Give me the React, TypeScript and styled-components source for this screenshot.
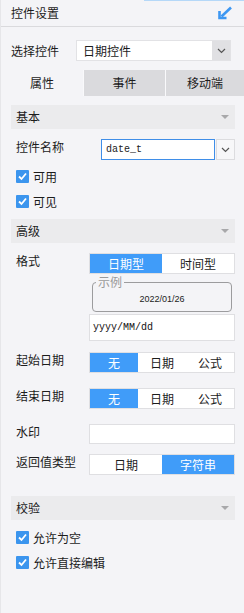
import React from 'react';
import styled, { createGlobalStyle } from 'styled-components';

const GlobalStyle = createGlobalStyle`
  html, body {
    margin: 0;
    padding: 0;
    background: #f4f4f7;
  }
  body {
    font-family: "Noto Sans CJK SC", "Noto Sans", sans-serif;
    font-size: 12px;
    color: #1c1c1c;
  }
`;

const BLUE = '#409cf9';

const Chevron = () => (
  <svg width='9' height='6' viewBox='0 0 9 6'>
    <polyline points='1,1 4.5,4.5 8,1' fill='none' stroke='#555' strokeWidth='1.2' />
  </svg>
);

const ShrinkIcon = () => (
  <svg width='16' height='14' viewBox='0 0 16 14'>
    <line x1='14' y1='1.5' x2='4.5' y2='10.5' stroke='#3d97f2' strokeWidth='2.6' />
    <polyline points='2.5,5 2.5,12 9.5,12' fill='none' stroke='#3d97f2' strokeWidth='2.6' />
  </svg>
);

const CheckBox = () => (
  <Box>
    <svg width='11' height='11' viewBox='0 0 11 11'>
      <polyline points='2,5.5 4.5,8 9,2.5' fill='none' stroke='#fff' strokeWidth='1.8' />
    </svg>
  </Box>
);

const Segmented = ({ options, active }: { options: string[]; active: number }) => (
  <SegmentWrap count={options.length}>
    {options.map((o, i) => (
      <Segment key={o} active={i === active}>
        {o}
      </Segment>
    ))}
  </SegmentWrap>
);

const Section = ({ title, top }: { title: string; top: number }) => (
  <SectionHeader top={top}>
    <span>{title}</span>
    <Triangle />
  </SectionHeader>
);

const App = () => {
  return (
    <>
      <GlobalStyle />
      <Panel>
        <Header>
          <span>控件设置</span>
          <ShrinkIcon />
        </Header>

        <SelectRow>
          <SelectLabel>选择控件</SelectLabel>
          <SelectBox>
            <SelectValue>日期控件</SelectValue>
            <SelectArrow>
              <Chevron />
            </SelectArrow>
          </SelectBox>
        </SelectRow>

        <Tabs>
          <Tab active>属性</Tab>
          <Tab>事件</Tab>
          <Tab>移动端</Tab>
        </Tabs>

        <Section title='基本' top={9} />
        <FormRow top={10} labelWidth={85}>
          <Label>控件名称</Label>
          <NameField>
            <NameInput>date_t</NameInput>
            <DropButton>
              <Chevron />
            </DropButton>
          </NameField>
        </FormRow>
        <CheckRow top={4}>
          <CheckBox />
          可用
        </CheckRow>
        <CheckRow>
          <CheckBox />
          可见
        </CheckRow>

        <Section title='高级' top={5} />
        <FormRow top={10}>
          <Label>格式</Label>
          <FormatColumn>
            <Segmented options={['日期型', '时间型']} active={0} />
            <Example>
              <legend>示例</legend>
              <ExampleText>2022/01/26</ExampleText>
            </Example>
            <TextField height={27} mono>
              yyyy/MM/dd
            </TextField>
          </FormatColumn>
        </FormRow>
        <FormRow top={11}>
          <Label>起始日期</Label>
          <Segmented options={['无', '日期', '公式']} active={0} />
        </FormRow>
        <FormRow top={15}>
          <Label>结束日期</Label>
          <Segmented options={['无', '日期', '公式']} active={0} />
        </FormRow>
        <FormRow top={15}>
          <Label>水印</Label>
          <TextField height={20} />
        </FormRow>
        <FormRow top={10}>
          <Label>返回值类型</Label>
          <Segmented options={['日期', '字符串']} active={1} />
        </FormRow>

        <Section title='校验' top={21} />
        <CheckRow top={5}>
          <CheckBox />
          允许为空
        </CheckRow>
        <CheckRow>
          <CheckBox />
          允许直接编辑
        </CheckRow>
      </Panel>
    </>
  );
};

const Panel = styled.div`
  position: relative;
  width: 244px;
  height: 613px;
  box-sizing: border-box;
  border-left: 1px solid #e6e6e9;
  background: #f4f4f7;
  overflow: hidden;

  &::before {
    content: '';
    position: absolute;
    top: 0;
    left: 143px;
    right: 0;
    height: 1px;
    background: #b5d8f8;
  }
`;

const Header = styled.div`
  height: 26px;
  border-bottom: 1px solid #dadadd;
  display: flex;
  align-items: center;
  justify-content: space-between;
  padding: 0 11px 0 10px;
  line-height: 16px;
`;

const SelectRow = styled.div`
  display: flex;
  align-items: center;
  margin-top: 13px;
  padding: 0 13px 0 10px;
`;

const SelectLabel = styled.span`
  width: 65px;
  line-height: 16px;
`;

const SelectBox = styled.div`
  flex: 1;
  height: 21px;
  display: flex;
  background: #fff;
  border: 1px solid #e2e2e5;
  box-sizing: border-box;
`;

const SelectValue = styled.div`
  flex: 1;
  padding-left: 6px;
  line-height: 19px;
`;

const SelectArrow = styled.div`
  width: 18px;
  background: #e0e0e3;
  display: flex;
  align-items: center;
  justify-content: center;
`;

const Tabs = styled.div`
  margin-top: 9px;
  display: grid;
  grid-template-columns: 82px 81px 1fr;
  column-gap: 1px;
  background: #f9f9fb;
`;

const Tab = styled.div<{ active?: boolean }>`
  height: 26px;
  line-height: 26px;
  text-align: center;
  background: ${({ active }) => (active ? '#f4f4f7' : '#dadadd')};
`;

const SectionHeader = styled.div<{ top: number }>`
  margin: ${({ top }) => top}px 9px 0 10px;
  height: 24px;
  background: #ebebed;
  display: flex;
  align-items: center;
  justify-content: space-between;
  padding: 0 6px 0 5px;
  line-height: 16px;
`;

const Triangle = styled.span`
  width: 0;
  height: 0;
  border-left: 4px solid transparent;
  border-right: 4px solid transparent;
  border-top: 4px solid #a8a8aa;
`;

const FormRow = styled.div<{ top: number; labelWidth?: number }>`
  display: grid;
  grid-template-columns: ${({ labelWidth }) => labelWidth ?? 73}px 1fr;
  align-items: start;
  margin-top: ${({ top }) => top}px;
  padding: 0 9px 0 15px;
`;

const Label = styled.span`
  line-height: 16px;
  white-space: nowrap;
`;

const NameField = styled.div`
  display: flex;
  gap: 1px;
  height: 21px;
`;

const NameInput = styled.div`
  flex: 1;
  background: #fff;
  border: 1px solid #3f8ee8;
  box-sizing: border-box;
  padding-left: 4px;
  font-family: "Liberation Mono", monospace;
  font-size: 10px;
  line-height: 19px;
  color: #222;
`;

const DropButton = styled.div`
  width: 19px;
  box-sizing: border-box;
  border: 1px solid #dcdcdf;
  background: #f7f7f9;
  display: flex;
  align-items: center;
  justify-content: center;
`;

const CheckRow = styled.div<{ top?: number }>`
  display: flex;
  align-items: center;
  gap: 4px;
  height: 25px;
  margin-top: ${({ top }) => top ?? 0}px;
  padding-left: 15px;
  line-height: 16px;
`;

const Box = styled.span`
  width: 13px;
  height: 13px;
  background: #3b95ee;
  border-radius: 1px;
  display: flex;
  align-items: center;
  justify-content: center;
`;

const FormatColumn = styled.div`
  display: flex;
  flex-direction: column;
`;

const SegmentWrap = styled.div<{ count: number }>`
  display: grid;
  grid-template-columns: repeat(${({ count }) => count}, 1fr);
  height: 21px;
  box-sizing: border-box;
  border: 1px solid #dfdfe2;
  background: #fff;
`;

const Segment = styled.div<{ active?: boolean }>`
  text-align: center;
  line-height: 19px;
  background: ${({ active }) => (active ? BLUE : '#fff')};
  color: ${({ active }) => (active ? '#fff' : '#1c1c1c')};
`;

const Example = styled.fieldset`
  margin: 2px 3px 0;
  padding: 0;
  border: 1px solid #9c9c9e;
  border-radius: 4px;

  legend {
    margin-left: 3px;
    padding: 0 2px;
    font-size: 12px;
    line-height: 12px;
    color: #9a9a9a;
  }
`;

const ExampleText = styled.div`
  text-align: center;
  font-family: "Liberation Sans", sans-serif;
  font-size: 9px;
  line-height: 11px;
  padding: 6px 0 6px;
  color: #222;
`;

const TextField = styled.div<{ height: number; mono?: boolean }>`
  height: ${({ height }) => height}px;
  margin-top: ${({ mono }) => (mono ? 2 : 0)}px;
  box-sizing: border-box;
  border: 1px solid #dfdfe2;
  background: #fff;
  padding-left: 3px;
  line-height: ${({ height }) => height - 2}px;
  font-family: ${({ mono }) => (mono ? '"Liberation Mono", monospace' : 'inherit')};
  font-size: ${({ mono }) => (mono ? 10 : 12)}px;
  color: #111;
`;

export default App;
